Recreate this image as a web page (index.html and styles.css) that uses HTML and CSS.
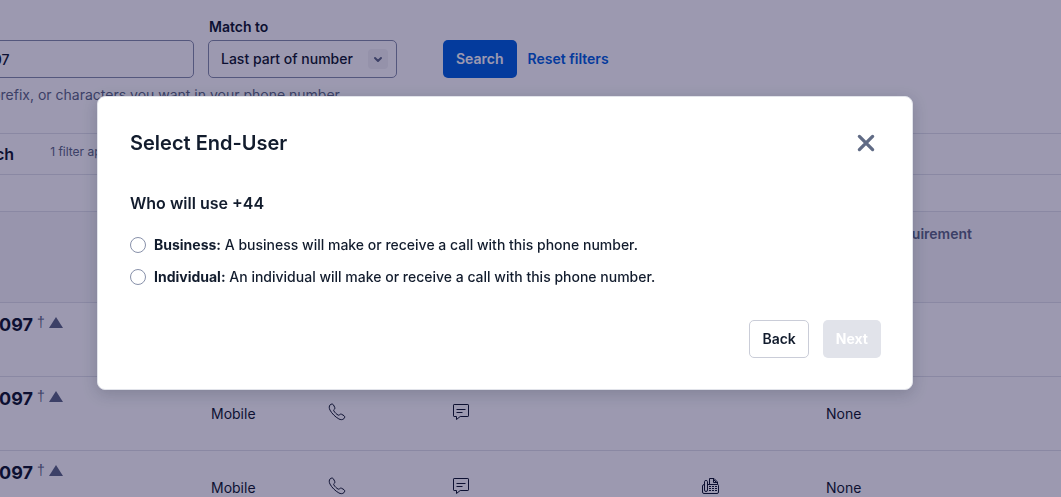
FILE: index.html
```html
<!DOCTYPE html>
<html lang="en">
<head>
<meta charset="utf-8">
<title>Buy a number</title>
<link rel="stylesheet" href="styles.css">
</head>
<body>
<svg class="sprite" aria-hidden="true">
  <symbol id="i-phone" viewBox="0 0 18 18"><path d="M2.2 1.8C3.2.8 4.8.8 5.4 1.8L6.7 4.3C7.2 5.3 6.7 6 6 6.5C5.5 7 5.6 7.5 5.9 8C7 9.7 8.5 11.2 10 12C10.6 12.3 11 12.3 11.5 11.8C12.1 11.2 12.8 10.8 13.7 11.3L16 12.7C17 13.3 16.9 14.8 15.9 15.7C14.5 17 12.5 16.9 10.8 15.9C7.3 13.9 3.9 10.6 2 7.1C1 5.2 .9 3.1 2.2 1.8Z"/></symbol>
  <symbol id="i-sms" viewBox="0 0 18 18"><path d="M2.1 1.5H15.9Q16.5 1.5 16.5 2.1V12.9Q16.5 13.5 15.9 13.5H8.2L4.5 16.5V13.5H2.1Q1.5 13.5 1.5 12.9V2.1Q1.5 1.5 2.1 1.5ZM4.5 6.5H13.5M4.5 9.5H10.5"/></symbol>
  <symbol id="i-fax" viewBox="0 0 18 18"><path d="M2.5 7.5Q.5 7.5 .5 9V15Q.5 16.5 2 16.5H15Q16.5 16.5 16.5 15V8.5Q16.5 7.5 15.5 7.5H5.5M2.5 13V4.5Q2.5 3.5 4 3.5T5.5 4.5V13Q5.5 14.5 4 14.5T2.5 13M7.5 7.5V1.5H12L15.5 5V7.5M11.5 1.5V5.5H15.5M12 3L14 5"/><path d="M7 9.5H15M7 11.5H15M7 13.5H15" stroke-dasharray="2 1"/></symbol>
</svg>
<main class="page">
  <form class="filters">
    <div class="field field-number">
      <input class="control control-number" type="text" value="97" aria-label="Number" aria-describedby="help">
    </div>
    <div class="field">
      <label class="label" for="match">Match to</label>
      <div class="select-wrap">
        <select class="control select" id="match"><option>Last part of number</option></select>
        <span class="chevron"><svg viewBox="0 0 20 20" aria-hidden="true"><path d="M7 9L10 12L13 9"/></svg></span>
      </div>
    </div>
    <div class="actions">
      <button class="btn btn-primary" type="button">Search</button>
      <a class="reset" href="#">Reset filters</a>
    </div>
  </form>
  <p class="help" id="help">prefix, or characters you want in your phone number</p>
  <div class="summary"><h2 class="summary-title">ch</h2><span class="summary-count">1 filter applied</span></div>
  <div class="spacer"></div>
  <table class="numbers">
    <colgroup><col class="c-number"><col class="c-type"><col class="c-cap"><col class="c-cap-wide"><col class="c-cap-wide"><col class="c-cap"><col></colgroup>
    <thead><tr><th></th><th></th><th></th><th></th><th></th><th></th><th scope="col">Address Requirement</th></tr></thead>
    <tbody>
      <tr><td class="number"><div class="number-line"><strong>097</strong><span class="dagger">†</span><i class="triangle"></i></div></td><td>Mobile</td><td><svg class="icon"><use href="#i-phone"/></svg></td><td><svg class="icon"><use href="#i-sms"/></svg></td><td></td><td></td><td>None</td></tr>
      <tr><td class="number"><div class="number-line"><strong>097</strong><span class="dagger">†</span><i class="triangle"></i></div></td><td>Mobile</td><td><svg class="icon"><use href="#i-phone"/></svg></td><td><svg class="icon"><use href="#i-sms"/></svg></td><td></td><td></td><td>None</td></tr>
      <tr><td class="number"><div class="number-line"><strong>097</strong><span class="dagger">†</span><i class="triangle"></i></div></td><td>Mobile</td><td><svg class="icon"><use href="#i-phone"/></svg></td><td><svg class="icon"><use href="#i-sms"/></svg></td><td></td><td><svg class="icon"><use href="#i-fax"/></svg></td><td>None</td></tr>
    </tbody>
  </table>
</main>
<div class="overlay">
  <form class="modal" role="dialog" aria-modal="true" aria-labelledby="modal-title">
    <header class="modal-header">
      <h1 class="modal-title" id="modal-title">Select End-User</h1>
      <button class="close" type="button" aria-label="Close"><svg viewBox="0 0 20 20" aria-hidden="true"><path d="M4 4L16 16M16 4L4 16"/></svg></button>
    </header>
    <fieldset class="choices">
      <legend class="question">Who will use +44</legend>
      <label class="choice"><input class="radio" type="radio" name="user"><span><b>Business:</b> A business will make or receive a call with this phone number.</span></label>
      <label class="choice"><input class="radio" type="radio" name="user"><span><b>Individual:</b> An individual will make or receive a call with this phone number.</span></label>
    </fieldset>
    <footer class="modal-footer">
      <button class="btn btn-secondary" type="button">Back</button>
      <button class="btn btn-disabled" type="button" disabled>Next</button>
    </footer>
  </form>
</div>
</body>
</html>
```
FILE: styles.css
```css
* { box-sizing: border-box; }
html, body { height: 100%; }
body {
  margin: 0;
  overflow: hidden;
  background: #fff;
  color: #121c2d;
  font: 14px/20px Inter, "Liberation Sans", sans-serif;
}
h1, h2, p { margin: 0; }
input, select, button { font: inherit; color: inherit; }
.sprite { display: none; }

.page { height: 100%; margin-left: -22px; padding-top: 16px; overflow: hidden; }
.filters { display: flex; align-items: flex-end; gap: 14px; }
.field-number { width: 216px; }
.label { display: block; margin-bottom: 2px; padding-left: 1px; font-weight: 600; line-height: 22px; }
.control {
  display: block;
  width: 100%;
  height: 38px;
  padding: 0 12px;
  border: 1px solid #8891aa;
  border-radius: 5px;
  background: #fff;
  font-weight: 500;
}
.control-number { padding-left: 14px; }
.select-wrap { position: relative; width: 189px; }
.select { appearance: none; }
.chevron {
  position: absolute;
  top: 9px;
  right: 9px;
  width: 20px;
  height: 20px;
  border-radius: 4px;
  background: #f4f4f6;
  pointer-events: none;
}
.chevron svg { display: block; fill: none; stroke: #606b85; stroke-width: 2; stroke-linecap: round; stroke-linejoin: round; }
.actions { display: flex; align-items: center; gap: 11px; padding-left: 32px; }
.btn {
  height: 38px;
  padding: 0 12px;
  border: 1px solid transparent;
  border-radius: 5px;
  font-weight: 600;
}
.btn-primary { background: #0263e0; color: #fff; }
.btn-secondary { background: #fff; border-color: #cacdd8; }
.btn-disabled { background: #e1e3ea; color: #fff; font-weight: 700; }
.reset { color: #0263e0; font-weight: 600; text-decoration: none; }
.help { padding: 7px 0 0 14px; color: #606b85; }

.summary {
  display: flex;
  align-items: center;
  gap: 36px;
  height: 42px;
  margin-top: 28px;
  padding-left: 17px;
  border: solid #e1e3ea;
  border-width: 1px 0;
}
.summary-title { font-size: 16px; font-weight: 600; }
.summary-count { padding-bottom: 4px; color: #606b85; font-size: 12px; }
.spacer { height: 36px; }

.numbers { width: 100%; border-collapse: collapse; table-layout: fixed; }
.numbers tr { height: 74px; border-top: 1px solid #e1e3ea; }
.numbers thead tr { height: 91px; background: #f9f9fa; }
.numbers th, .numbers td { padding: 0 12px; text-align: left; vertical-align: middle; }
.numbers th { padding-top: 12px; vertical-align: top; color: #606b85; font-weight: 600; }
.c-number { width: 221px; }
.c-type { width: 117px; }
.c-cap { width: 124px; }
.c-cap-wide { width: 125px; }
.numbers .number { padding: 11px 0 0 21px; vertical-align: top; }
.number-line { display: flex; align-items: flex-start; }
.number strong { font-size: 18px; font-weight: 700; line-height: 22px; }
.dagger { margin: 0 4px; color: #606b85; font: 14px/16px "Liberation Sans", sans-serif; }
.triangle {
  margin-top: 3px;
  border: solid transparent;
  border-width: 0 7px 11px;
  border-bottom-color: #606b85;
}
.icon { display: block; width: 18px; height: 18px; margin-bottom: 4px; fill: none; stroke: #121c2d; }

.overlay {
  position: fixed;
  inset: 0;
  display: flex;
  align-items: flex-start;
  padding: 96px 148px 0 97px;
  background: rgba(8, 1, 58, 0.4);
}
.modal {
  flex: 1;
  padding: 32px 31px 31px 32px;
  border: 1px solid #e1e3ea;
  border-radius: 8px;
  background: #fff;
  box-shadow: 0 4px 16px rgba(18, 28, 45, 0.2);
}
.modal-header { display: flex; align-items: center; justify-content: space-between; height: 28px; }
.modal-title { font-size: 20px; font-weight: 600; line-height: 28px; }
.close { display: flex; padding: 4px; border: 0; background: none; }
.close svg { width: 22px; height: 22px; fill: none; stroke: #606b85; stroke-width: 3; stroke-linecap: round; }
.choices { display: flex; flex-direction: column; gap: 12px; margin: 34px 0 33px; padding: 0; border: 0; }
.question { margin-bottom: 20px; padding: 0; font-size: 16px; font-weight: 600; line-height: 24px; }
.choice { display: flex; align-items: center; gap: 8px; font-weight: 500; }
.choice b { font-weight: 700; }
.radio {
  appearance: none;
  width: 16px;
  height: 16px;
  margin: 0;
  border: 1px solid #8891aa;
  border-radius: 50%;
}
.modal-footer { display: flex; justify-content: flex-end; gap: 14px; }
```
